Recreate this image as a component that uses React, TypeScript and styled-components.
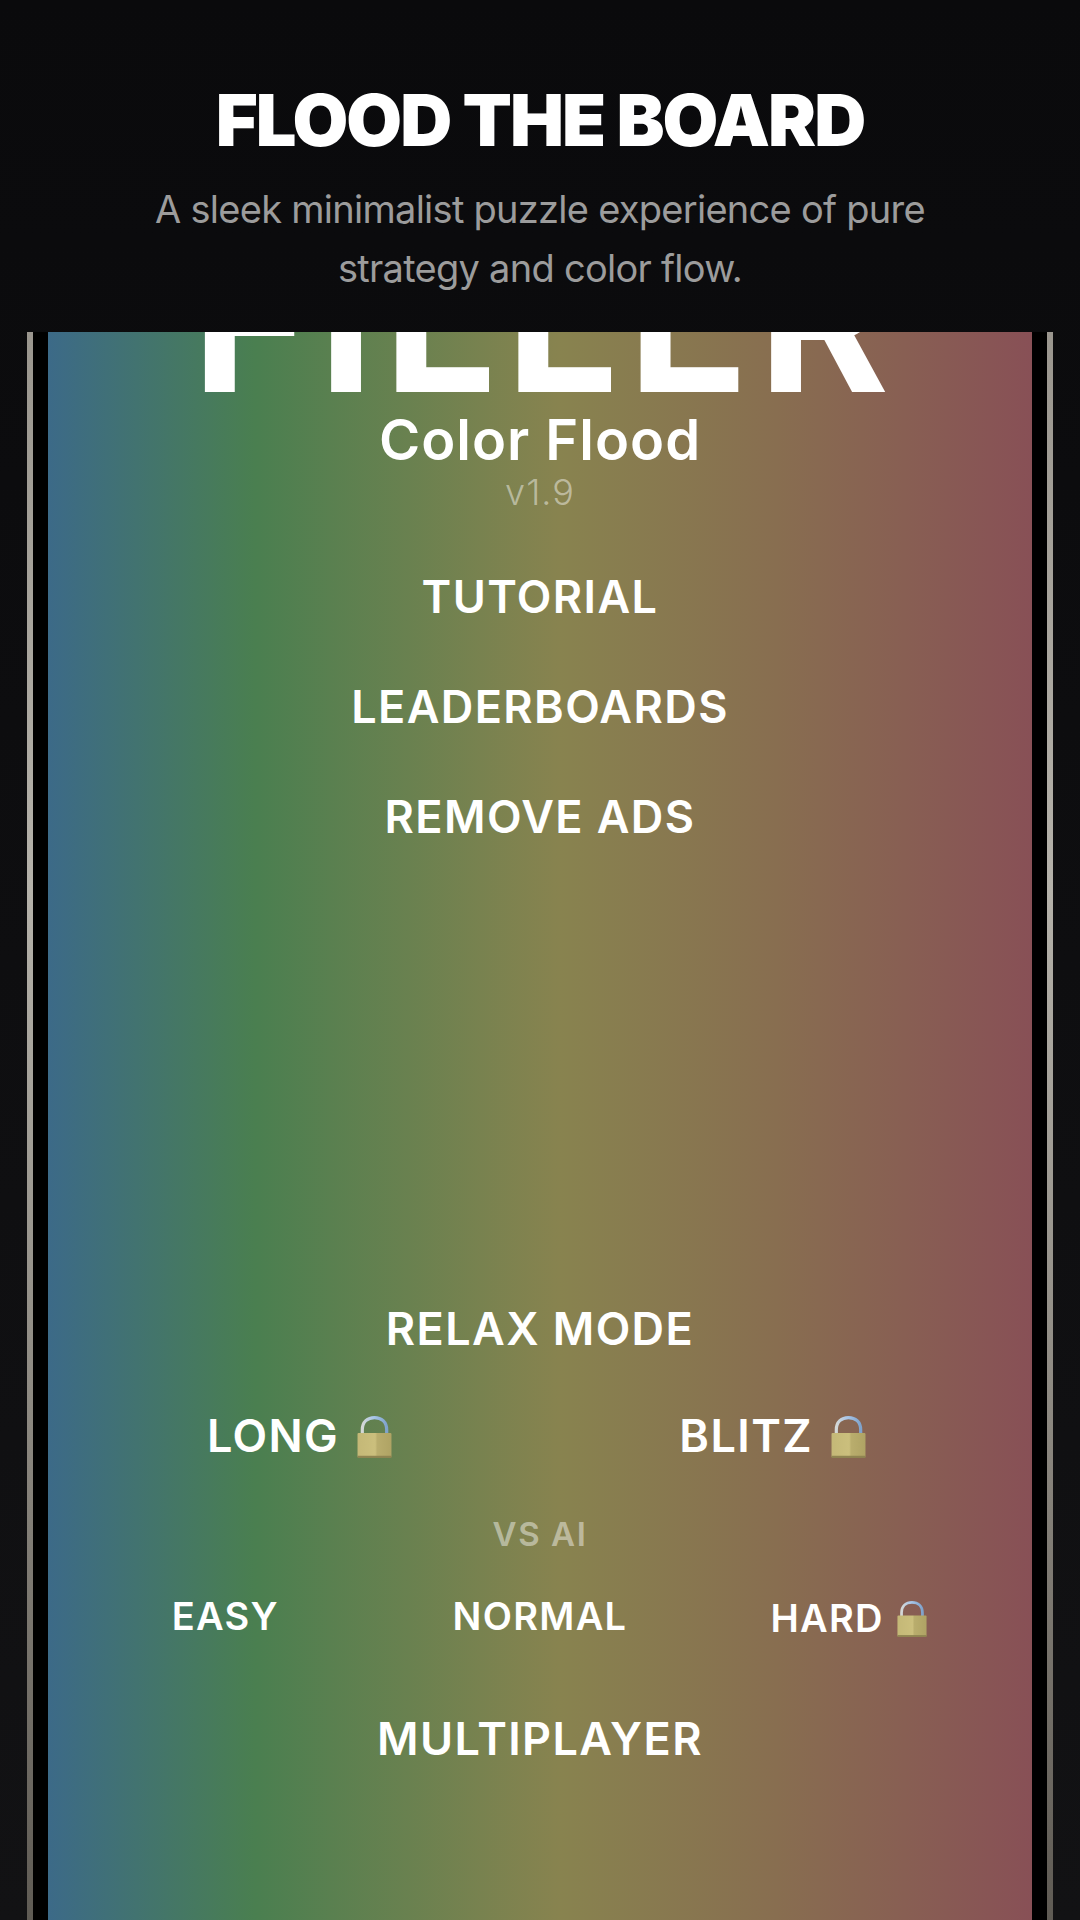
import React from "react";
import styled, { createGlobalStyle } from "styled-components";

const GlobalStyle = createGlobalStyle`
  html, body {
    margin: 0;
    padding: 0;
    background: #0b0b0d;
  }
  * {
    box-sizing: border-box;
  }
`;

const LockIcon = ({ id, size }: { id: string; size: number }) => (
  <LockSvg viewBox="0 0 33 40" width={size} height={(size * 40) / 33}>
    <defs>
      <linearGradient id={`${id}-shackle`} x1="0" y1="0" x2="1" y2="0">
        <stop offset="0" stopColor="#d5d8d6" />
        <stop offset="0.45" stopColor="#a9c6e8" />
        <stop offset="1" stopColor="#7fa3cc" />
      </linearGradient>
      <linearGradient id={`${id}-body`} x1="0" y1="0" x2="1" y2="0">
        <stop offset="0" stopColor="#c4b877" />
        <stop offset="0.52" stopColor="#cbbf7d" />
        <stop offset="0.58" stopColor="#b9ad6d" />
        <stop offset="1" stopColor="#afa364" />
      </linearGradient>
    </defs>
    <path
      d="M5 18V13C5 5.500 10 1.500 16.500 1.500S28 5.500 28 13v5"
      fill="none"
      stroke={`url(#${id}-shackle)`}
      strokeWidth="3"
    />
    <rect x="0.500" y="16" width="32" height="23" rx="1" fill={`url(#${id}-body)`} />
    <rect x="0.500" y="37.500" width="32" height="2" fill="#8f8451" />
  </LockSvg>
);

const Label = ({ text, size, locked }: { text: string; size: "lg" | "sm"; locked?: boolean }) => (
  <ModeButton $size={size}>
    {text}
    {locked && <LockIcon id={text} size={size === "lg" ? 35 : 30} />}
  </ModeButton>
);

export default function App() {
  return (
    <>
      <GlobalStyle />
      <Page>
        <Header>
          <Headline>FLOOD THE BOARD</Headline>
          <Tagline>
            A sleek minimalist puzzle experience of pure
            <br />
            strategy and color flow.
          </Tagline>
        </Header>
        <PhoneFrame>
          <Screen>
            <LogoClip>
              <Logo>FILLER</Logo>
            </LogoClip>
            <Subtitle>Color Flood</Subtitle>
            <Version>v1.9</Version>
            <TopMenu>
              <MenuItem>TUTORIAL</MenuItem>
              <MenuItem>LEADERBOARDS</MenuItem>
              <MenuItem>REMOVE ADS</MenuItem>
            </TopMenu>
            <BottomMenu>
              <MenuItem>RELAX MODE</MenuItem>
              <ModeRow>
                <Label text="LONG" size="lg" locked />
                <Label text="BLITZ" size="lg" locked />
              </ModeRow>
              <SectionLabel>VS AI</SectionLabel>
              <AiRow>
                <Label text="EASY" size="sm" />
                <Label text="NORMAL" size="sm" />
                <HardSlot>
                  <Label text="HARD" size="sm" locked />
                </HardSlot>
              </AiRow>
              <MultiItem>MULTIPLAYER</MultiItem>
            </BottomMenu>
          </Screen>
        </PhoneFrame>
      </Page>
    </>
  );
}

const Page = styled.div`
  width: 1080px;
  height: 1920px;
  display: flex;
  flex-direction: column;
  overflow: hidden;
  background: linear-gradient(180deg, #0a0a0c, #121214);
  font-family: Inter, "Liberation Sans", sans-serif;
  color: #fff;
`;

const Header = styled.header`
  height: 332px;
  flex: none;
  padding-top: 80px;
  text-align: center;
`;

const Headline = styled.h1`
  margin: 0;
  font-size: 72px;
  line-height: 80px;
  font-weight: 900;
  letter-spacing: -2px;
`;

const Tagline = styled.p`
  margin: 20px 0 0;
  font-size: 38px;
  line-height: 59px;
  font-weight: 400;
  letter-spacing: -0.73px;
  color: #9c9c9c;
`;

const PhoneFrame = styled.div`
  flex: 1;
  margin: 0 27px;
  display: flex;
  border-left: 6px solid;
  border-right: 6px solid;
  border-image: linear-gradient(180deg, #9a968e 0%, #b5b2aa 35%, #8a867e 70%, #5f5b54 100%) 1;
  background: #000;
  padding: 0 15px;
`;

const Screen = styled.main`
  flex: 1;
  display: flex;
  flex-direction: column;
  align-items: center;
  background: linear-gradient(
    90deg,
    #3c6a88 0%,
    #4a7f50 21%,
    #88834f 52%,
    #886e50 74%,
    #885056 100%
  );
`;

const LogoClip = styled.div`
  height: 60px;
  width: 100%;
  display: flex;
  justify-content: center;
  align-items: flex-end;
  overflow: hidden;
`;

const Logo = styled.div`
  margin-left: 10px;
  font-size: 200px;
  line-height: 146px;
  height: 146px;
  font-weight: 700;
  letter-spacing: 9px;
  color: #fff;
`;

const Subtitle = styled.div`
  margin-top: 16px;
  font-size: 56px;
  line-height: 64px;
  font-weight: 600;
  letter-spacing: 1px;
`;

const Version = styled.div`
  font-size: 36px;
  line-height: 40px;
  font-weight: 300;
  letter-spacing: 1px;
  color: rgba(255, 255, 255, 0.45);
`;

const TopMenu = styled.nav`
  margin-top: 60px;
  display: flex;
  flex-direction: column;
  align-items: center;
  gap: 60px;
`;

const MenuItem = styled.div`
  font-size: 45px;
  line-height: 50px;
  font-weight: 600;
  letter-spacing: 1.4px;
`;

const BottomMenu = styled.div`
  margin-top: 462px;
  width: 100%;
  display: flex;
  flex-direction: column;
  align-items: center;
`;

const ModeRow = styled.div`
  margin-top: 57px;
  width: 100%;
  display: flex;
  justify-content: space-between;
  padding: 0 166px 0 159px;
`;

const ModeButton = styled.div<{ $size: "lg" | "sm" }>`
  display: inline-flex;
  align-items: center;
  gap: ${(p) => (p.$size === "lg" ? "18px" : "13px")};
  font-size: ${(p) => (p.$size === "lg" ? "45px" : "38px")};
  line-height: 50px;
  font-weight: 600;
  letter-spacing: ${(p) => (p.$size === "lg" ? "1.4px" : "1.3px")};
`;

const LockSvg = styled.svg`
  flex: none;
  margin-top: 2px;
`;

const SectionLabel = styled.div`
  margin-top: 55px;
  font-size: 33px;
  line-height: 36px;
  font-weight: 600;
  letter-spacing: 1.6px;
  color: rgba(255, 255, 255, 0.45);
`;

const AiRow = styled.div`
  margin-top: 37px;
  width: 100%;
  display: grid;
  grid-template-columns: 1fr 1fr 1fr;
  justify-items: center;
  padding: 0 20px;
`;

const HardSlot = styled.div`
  margin: 4px 12px 0 0;
`;

const MultiItem = styled(MenuItem)`
  margin-top: 71px;
`;
